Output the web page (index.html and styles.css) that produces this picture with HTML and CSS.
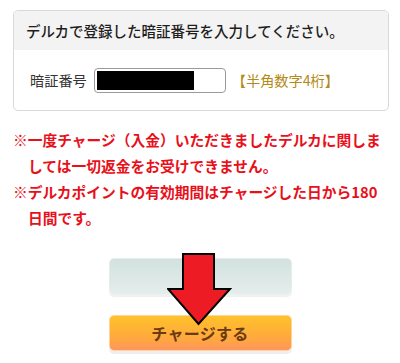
FILE: index.html
```html
<!DOCTYPE html>
<html lang="ja">
<head>
<meta charset="utf-8">
<link rel="stylesheet" href="styles.css">
</head>
<body>
<div class="page">
  <section class="card">
    <div class="card-head">デルカで登録した暗証番号を入力してください。</div>
    <div class="card-body">
      <span class="label">暗証番号</span>
      <span class="pin-input"><span class="pin-mask"></span></span>
      <span class="hint">【半角数字4桁】</span>
    </div>
  </section>
  <div class="notes">
    <p class="note">※一度チャージ（入金）いただきましたデルカに関しま<br>しては一切返金をお受けできません。</p>
    <p class="note">※デルカポイントの有効期間はチャージした日から180<br>日間です。</p>
  </div>
  <div class="actions">
    <div class="btn btn-back"></div>
    <div class="btn btn-charge">チャージする</div>
    <svg class="arrow" width="66" height="74" viewBox="0 0 66 74">
      <polygon points="16,1 47,1 47,36 63,36 31.5,71 1,36 16,36" fill="#ed1c24" stroke="#000" stroke-width="2" stroke-linejoin="miter"/>
    </svg>
  </div>
</div>
</body>
</html>
```
FILE: styles.css
```css
* { box-sizing: border-box; }
html, body { margin: 0; padding: 0; background: #fff; }
body {
  font-family: "Noto Sans CJK JP", "Noto Sans", sans-serif;
  color: #222;
  width: 400px;
  height: 363px;
  overflow: hidden;
}
.page { padding: 10px 11px 0 13px; }
.card {
  border: 1px solid #d9d9d9;
  border-radius: 5px;
  overflow: hidden;
}
.card-head {
  background: #f3f3f3;
  height: 39px;
  display: flex;
  align-items: center;
  padding-left: 12px;
  font-size: 14.5px;
  font-weight: 500;
  color: #1e1e1e;
}
.card-body {
  height: 60px;
  display: flex;
  align-items: center;
  padding-left: 16px;
  font-size: 14.2px;
}
.label { color: #333; margin-right: 7px; }
.pin-input {
  width: 132px;
  height: 25px;
  border: 1px solid #9a9a9a;
  border-radius: 4px;
  background: #fff;
  padding: 2px;
  display: flex;
}
.pin-mask { width: 97px; height: 100%; background: #000; }
.hint { color: #b48a17; margin-left: 6px; }
.notes { margin-top: 16px; }
.note {
  margin: 0;
  padding-left: 15px;
  text-indent: -15px;
  color: #e8101a;
  font-weight: 700;
  font-size: 14.75px;
  line-height: 26px;
}
.actions {
  position: relative;
  display: flex;
  flex-direction: column;
  align-items: center;
  gap: 21px;
  margin-top: 27px;
  padding-right: 2px;
}
.btn {
  width: 183px;
  height: 36px;
  border-radius: 5px;
}
.btn-back {
  background: linear-gradient(#d2e2df, #e4edeb);
  border: 1px solid #e6eeec;
  box-shadow: 0 3px 0 #eef1f0;
}
.btn-charge {
  background: linear-gradient(#ffc22a, #ffa640 70%, #ff9560);
  border: 1px solid #ffd49a;
  box-shadow: 0 3px 0 #eeeeee;
  display: flex;
  align-items: center;
  justify-content: center;
  font-size: 16px;
  font-weight: 700;
  color: #6a3a12;
  letter-spacing: 0.3px;
}
.arrow {
  position: absolute;
  left: 154px;
  top: -5px;
}
```
